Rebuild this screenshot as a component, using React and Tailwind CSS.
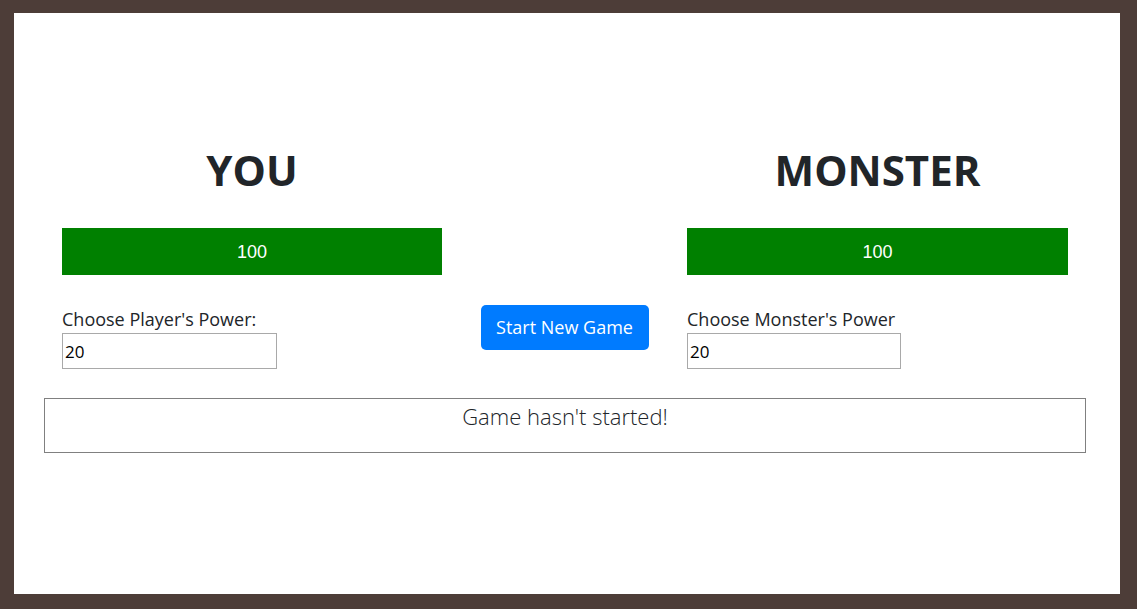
export default function App() {
  const font = { fontFamily: '"Open Sans", "Noto Sans", sans-serif' };
  return (
    <div className="w-[1137px] h-[609px] bg-[#4d3d38] pt-[13px] pl-[14px]" style={font}>
      <div className="w-[1106px] h-[581px] bg-white pt-[132px] pl-[30px]">
        <div className="w-[1042px]">
          <div className="flex pl-[18px]">
            <div className="w-[380px] flex flex-col">
              <h1 className="text-center text-[42px] leading-[50px] font-bold text-[#212529]">YOU</h1>
              <div className="mt-[33px] h-[47px] bg-[#008000] flex items-center justify-center pt-[2px] text-white text-[18px]" style={{ fontFamily: '"Liberation Sans", Arial, sans-serif' }}>100</div>
              <label className="mt-[32px] text-[18px] leading-[24px] text-[#212529]">Choose Player's Power:</label>
              <input defaultValue="20" className="mt-[2px] w-[215px] h-[36px] border border-[#a9a9a9] px-[2px] text-[17px] text-black outline-none" />
            </div>
            <div className="w-[245px] flex justify-center items-start pt-[160px]">
              <button className="w-[168px] h-[45px] rounded-[5px] bg-[#007bff] text-white text-[18px]">Start New Game</button>
            </div>
            <div className="w-[381px] flex flex-col">
              <h1 className="text-center text-[42px] leading-[50px] font-bold text-[#212529]">MONSTER</h1>
              <div className="mt-[33px] h-[47px] bg-[#008000] flex items-center justify-center pt-[2px] text-white text-[18px]" style={{ fontFamily: '"Liberation Sans", Arial, sans-serif' }}>100</div>
              <label className="mt-[32px] text-[18px] leading-[24px] text-[#212529]">Choose Monster's Power</label>
              <input defaultValue="20" className="mt-[2px] w-[214px] h-[36px] border border-[#a9a9a9] px-[2px] text-[17px] text-black outline-none" />
            </div>
          </div>
          <div className="mt-[29px] h-[55px] border border-[#808080] text-center">
            <p className="text-[22px] leading-[34px] font-light text-[#212529]">Game hasn't started!</p>
          </div>
        </div>
      </div>
    </div>
  );
}
